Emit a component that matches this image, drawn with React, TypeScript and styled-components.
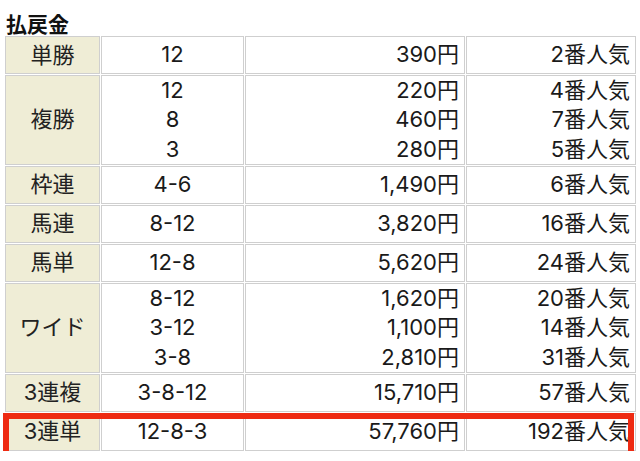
import React from "react";
import styled, { createGlobalStyle } from "styled-components";

const Global = createGlobalStyle`
  html, body { margin: 0; padding: 0; background: #ffffff; }
  body { font-family: Inter, "Noto Sans CJK JP", sans-serif; color: #1a1a1a; }
`;

const Page = styled.div`
  width: 640px;
  padding: 11px 7px 0 5px;
  box-sizing: border-box;
`;

const Title = styled.h2`
  margin: 0 0 0 1px;
  font-family: "Noto Sans CJK JP", sans-serif;
  font-size: 21px;
  line-height: 25px;
  height: 25px;
  font-weight: 700;
  color: #111;
`;

const TableWrap = styled.div`
  position: relative;
`;

const Table = styled.table`
  width: 628px;
  border-collapse: separate;
  border-spacing: 1px;
  margin: -1px;
  table-layout: fixed;
`;

const Head = styled.th`
  width: 93px;
  background: #efedd6;
  border: 1px solid #cfcfcf;
  font-family: Inter, "Noto Sans CJK JP", sans-serif;
  font-size: 22px;
  font-weight: 400;
  text-align: center;
  padding: 0;
  height: 36px;
  line-height: 29px;
  color: #222;
  overflow: hidden;
`;

const Cell = styled.td<{ $align: "center" | "right"; $w: number }>`
  width: ${(p) => p.$w}px;
  border: 1px solid #cfcfcf;
  font-family: Inter, "Noto Sans CJK JP", sans-serif;
  font-size: 22px;
  text-align: ${(p) => p.$align};
  padding: 0 ${(p) => (p.$align === "right" ? "5px" : "0")} 0 0;
  height: 36px;
  vertical-align: middle;
  color: #1a1a1a;
  white-space: nowrap;
`;

const Line = styled.div`
  height: 29.33px;
  line-height: 29.33px;
  overflow: visible;
`;

const Highlight = styled.div`
  position: absolute;
  left: -2px;
  right: -1px;
  bottom: -5px;
  height: 44px;
  border: 6px solid #ee2a12;
  box-sizing: border-box;
  pointer-events: none;
`;

type Row = { name: string; combos: string[]; pays: string[]; pops: string[] };

const rows: Row[] = [
  { name: "単勝", combos: ["12"], pays: ["390円"], pops: ["2番人気"] },
  { name: "複勝", combos: ["12", "8", "3"], pays: ["220円", "460円", "280円"], pops: ["4番人気", "7番人気", "5番人気"] },
  { name: "枠連", combos: ["4-6"], pays: ["1,490円"], pops: ["6番人気"] },
  { name: "馬連", combos: ["8-12"], pays: ["3,820円"], pops: ["16番人気"] },
  { name: "馬単", combos: ["12-8"], pays: ["5,620円"], pops: ["24番人気"] },
  { name: "ワイド", combos: ["8-12", "3-12", "3-8"], pays: ["1,620円", "1,100円", "2,810円"], pops: ["20番人気", "14番人気", "31番人気"] },
  { name: "3連複", combos: ["3-8-12"], pays: ["15,710円"], pops: ["57番人気"] },
  { name: "3連単", combos: ["12-8-3"], pays: ["57,760円"], pops: ["192番人気"] },
];

const Lines = ({ items }: { items: string[] }) => (
  <>
    {items.map((t, i) => (
      <Line key={i}>{t}</Line>
    ))}
  </>
);

export default function App() {
  return (
    <>
      <Global />
      <Page>
        <Title>払戻金</Title>
        <TableWrap>
          <Table>
            <tbody>
              {rows.map((r) => (
                <tr key={r.name}>
                  <Head>{r.name}</Head>
                  <Cell $align="center" $w={141}>
                    <Lines items={r.combos} />
                  </Cell>
                  <Cell $align="right" $w={213}>
                    <Lines items={r.pays} />
                  </Cell>
                  <Cell $align="right" $w={163}>
                    <Lines items={r.pops} />
                  </Cell>
                </tr>
              ))}
            </tbody>
          </Table>
          <Highlight />
        </TableWrap>
      </Page>
    </>
  );
}
